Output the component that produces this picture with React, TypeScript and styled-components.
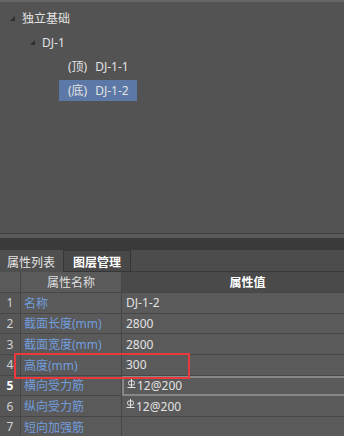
import React from 'react';
import styled, { createGlobalStyle } from 'styled-components';

const GlobalStyle = createGlobalStyle`
  html, body {
    margin: 0;
    padding: 0;
    background: #535353;
  }
  body {
    font-family: "Noto Sans", "Noto Sans CJK SC", sans-serif;
    font-size: 12px;
  }
`;

const Screen = styled.div`
  position: relative;
  width: 344px;
  height: 436px;
  overflow: hidden;
  display: flex;
  flex-direction: column;
  background: #535353;
`;

const TreePanel = styled.div`
  height: 233px;
  border-top: 2px solid #656565;
  padding-top: 4px;
  box-sizing: border-box;
  background: #535353;
  flex-shrink: 0;
`;

const TreeRow = styled.div<{ $level: number }>`
  height: 24px;
  display: flex;
  align-items: center;
  padding-left: ${(p) => 10 + p.$level * 20}px;
`;

const ArrowSlot = styled.span<{ $leaf?: boolean }>`
  display: inline-flex;
  width: ${(p) => (p.$leaf ? 9 : 12)}px;
  flex-shrink: 0;
`;

const TreeLabel = styled.span<{ $selected?: boolean; $leaf?: boolean }>`
  display: inline-flex;
  align-items: center;
  height: 21px;
  padding: ${(p) => (p.$leaf ? '0 8px 0 9px' : '0')};
  color: #e2e2e2;
  background: ${(p) => (p.$selected ? '#5b78a6' : 'transparent')};
  white-space: pre;
`;

const Face = styled.span`
  margin-right: 8px;
`;

const Splitter = styled.div`
  height: 5px;
  border-top: 1px solid #3f3f3f;
  box-sizing: border-box;
  background: #5a5a5a;
  flex-shrink: 0;
`;

const DarkBand = styled.div`
  height: 12px;
  background: #3a3a3a;
  flex-shrink: 0;
`;

const TabBar = styled.div`
  height: 22px;
  display: flex;
  align-items: stretch;
  background: #4c4c4c;
  flex-shrink: 0;
`;

const Tab = styled.div<{ $active?: boolean }>`
  display: flex;
  align-items: center;
  box-sizing: border-box;
  padding: ${(p) => (p.$active ? '1px 8px 0 7px' : '1px 9px 0 9px')};
  color: ${(p) => (p.$active ? '#e6e6e6' : '#ffffff')};
  font-weight: ${(p) => (p.$active ? 400 : 600)};
  background: ${(p) => (p.$active ? '#4f4f4f' : '#484848')};
  border: ${(p) => (p.$active ? 'none' : '1px solid #363636')};
  border-bottom: ${(p) => (p.$active ? 'none' : '1px solid #363636')};
`;

const TabFill = styled.div`
  flex: 1;
  border-bottom: 1px solid #393939;
`;

const Table = styled.div`
  display: grid;
  grid-template-columns: 21px 101px 252px;
  grid-auto-rows: 20.67px;
  grid-template-rows: 21px;
  width: 374px;
`;

const Cell = styled.div<{ $kind: 'num' | 'name' | 'value' }>`
  display: flex;
  align-items: center;
  box-sizing: border-box;
  border-right: 1px solid #474747;
  border-bottom: 1px solid #474747;
  padding-left: ${(p) => (p.$kind === 'num' ? 0 : p.$kind === 'name' ? 3 : 4)}px;
  justify-content: ${(p) => (p.$kind === 'num' ? 'center' : 'flex-start')};
  background: ${(p) => (p.$kind === 'num' ? '#565656' : '#5a5a5a')};
  color: ${(p) => (p.$kind === 'name' ? '#729ddd' : '#e2e2e2')};
  white-space: nowrap;
  overflow: hidden;
`;

const NumCell = styled(Cell)<{ $current?: boolean }>`
  color: ${(p) => (p.$current ? '#ffffff' : '#d2d2d2')};
  font-weight: ${(p) => (p.$current ? 700 : 400)};
`;

const CurrentValue = styled(Cell)`
  border: 2px solid #878787;
  border-right: none;
  padding-left: 3px;
`;

const HeaderCell = styled.div<{ $dark?: boolean }>`
  display: flex;
  align-items: center;
  justify-content: center;
  box-sizing: border-box;
  border-right: 1px solid #474747;
  border-bottom: 1px solid #474747;
  background: ${(p) => (p.$dark ? '#4a4a4a' : '#5a5a5a')};
  color: ${(p) => (p.$dark ? '#ffffff' : '#dedede')};
  font-weight: ${(p) => (p.$dark ? 700 : 400)};
`;

const RebarMark = styled.svg`
  width: 9px;
  height: 9px;
  margin: -5px 1px 0 0;
  flex-shrink: 0;
`;

const Highlight = styled.div`
  position: absolute;
  left: 14px;
  top: 353px;
  width: 176px;
  height: 26px;
  box-sizing: border-box;
  border: 2px solid #ea393c;
  pointer-events: none;
`;

const Arrow = () => (
  <svg width="5" height="5" viewBox="0 0 5 5">
    <polygon points="5,0 5,5 0,5" fill="#2e2e2e" />
  </svg>
);

const Rebar = () => (
  <RebarMark viewBox="0 0 9 9">
    <rect x="1.5" y="2" width="6" height="4" rx="1.5" fill="none" stroke="#e2e2e2" strokeWidth="1" />
    <line x1="4.5" y1="0" x2="4.5" y2="8" stroke="#e2e2e2" strokeWidth="1" />
    <line x1="0.5" y1="8.5" x2="8.5" y2="8.5" stroke="#e2e2e2" strokeWidth="1" />
  </RebarMark>
);

type Prop = { name: string; value: string; rebar?: boolean };

const props: Prop[] = [
  { name: '名称', value: 'DJ-1-2' },
  { name: '截面长度(mm)', value: '2800' },
  { name: '截面宽度(mm)', value: '2800' },
  { name: '高度(mm)', value: '300' },
  { name: '横向受力筋', value: '12@200', rebar: true },
  { name: '纵向受力筋', value: '12@200', rebar: true },
  { name: '短向加强筋', value: '' },
];

const currentRow = 4;

export default function App() {
  return (
    <Screen>
      <GlobalStyle />
      <TreePanel>
        <TreeRow $level={0}>
          <ArrowSlot>
            <Arrow />
          </ArrowSlot>
          <TreeLabel>独立基础</TreeLabel>
        </TreeRow>
        <TreeRow $level={1}>
          <ArrowSlot>
            <Arrow />
          </ArrowSlot>
          <TreeLabel>DJ-1</TreeLabel>
        </TreeRow>
        <TreeRow $level={2}>
          <ArrowSlot $leaf />
          <TreeLabel $leaf>
            <Face>(顶)</Face>DJ-1-1
          </TreeLabel>
        </TreeRow>
        <TreeRow $level={2}>
          <ArrowSlot $leaf />
          <TreeLabel $leaf $selected>
            <Face>(底)</Face>DJ-1-2
          </TreeLabel>
        </TreeRow>
      </TreePanel>
      <Splitter />
      <DarkBand />
      <TabBar>
        <Tab $active>属性列表</Tab>
        <Tab>图层管理</Tab>
        <TabFill />
      </TabBar>
      <Table>
        <HeaderCell />
        <HeaderCell>属性名称</HeaderCell>
        <HeaderCell $dark>属性值</HeaderCell>
        {props.map((p, i) => {
          const ValueCell = i === currentRow ? CurrentValue : Cell;
          return (
            <React.Fragment key={p.name}>
              <NumCell $kind="num" $current={i === currentRow}>
                {i + 1}
              </NumCell>
              <Cell $kind="name">{p.name}</Cell>
              <ValueCell $kind="value">
                {p.rebar && <Rebar />}
                {p.value}
              </ValueCell>
            </React.Fragment>
          );
        })}
      </Table>
      <Highlight />
    </Screen>
  );
}
